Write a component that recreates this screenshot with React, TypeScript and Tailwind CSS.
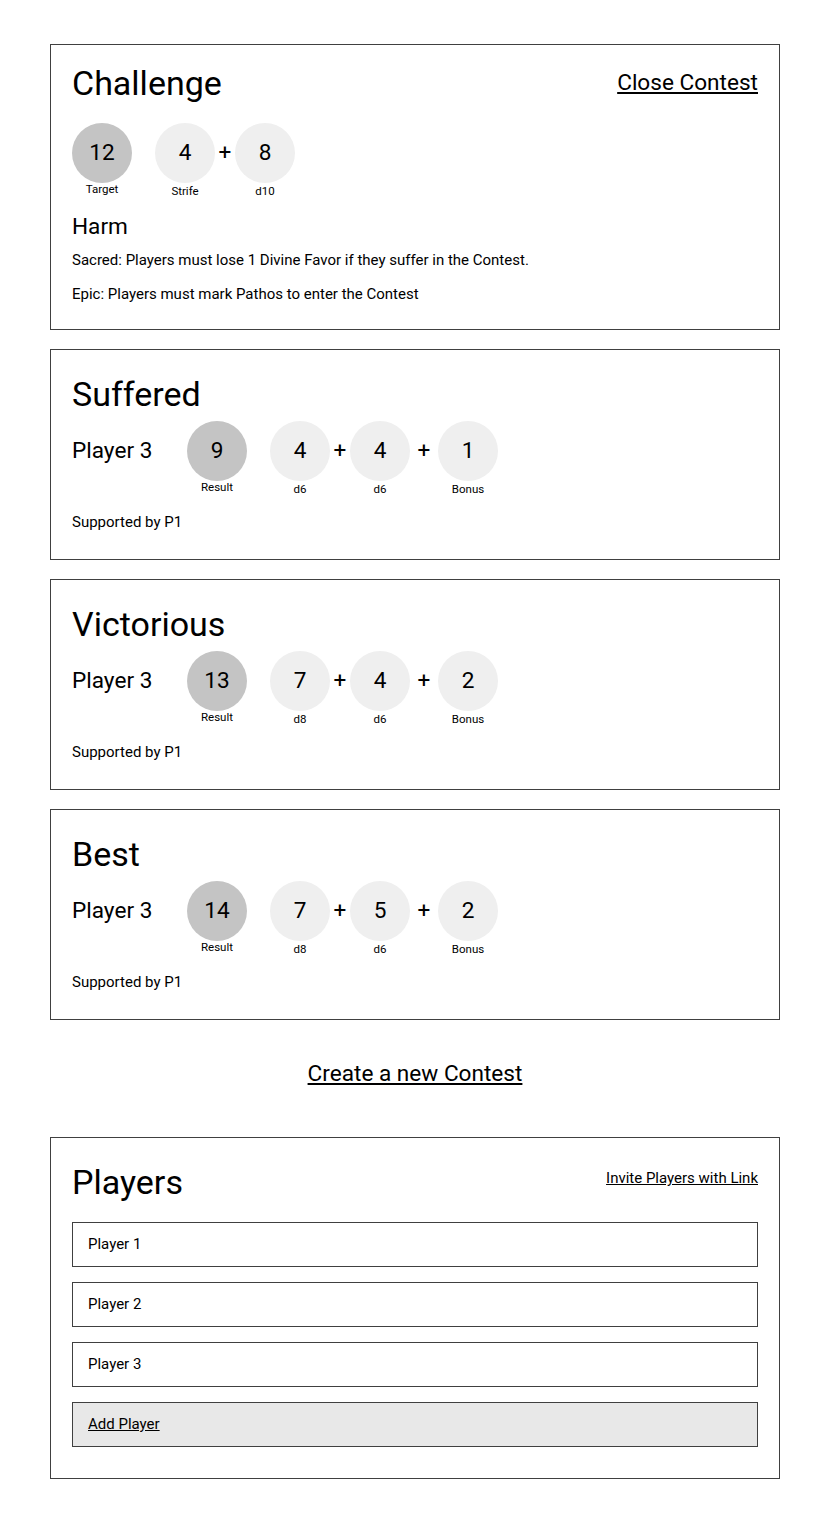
import React from 'react'

type DieProps = { value: number; label: string; main?: boolean }

const Die = ({ value, label, main }: DieProps) => (
  <div className="flex w-[60px] flex-col items-center">
    <div
      className={`flex h-[60px] w-[60px] items-center justify-center rounded-full text-[22.6px] ${
        main ? 'bg-[#c4c4c4]' : 'bg-[#efefef]'
      }`}
    >
      {value}
    </div>
    <span className={`text-[11.5px] leading-[13px] ${main ? 'mt-0' : 'mt-[2px]'}`}>{label}</span>
  </div>
)

const Plus = ({ wide }: { wide?: boolean }) => (
  <span className={`flex h-[60px] items-center justify-center text-[22.6px] ${wide ? 'w-[28px]' : 'w-[20px]'}`}>+</span>
)

type Roll = { value: number; label: string }

const ResultCard = ({ title, result, rolls }: { title: string; result: number; rolls: Roll[] }) => (
  <div className="border border-[#404040] px-[21px] pt-[24px] pb-[27px]">
    <h2 className="text-[34px] leading-[40px]">{title}</h2>
    <div className="mt-[7px] flex items-start">
      <span className="flex h-[60px] w-[115px] items-center text-[22.6px]">Player 3</span>
      <Die value={result} label="Result" main />
      <div className="ml-[23px] flex items-start">
        {rolls.map((r, i) => (
          <React.Fragment key={i}>
            {i > 0 && <Plus wide={i === 2} />}
            <Die value={r.value} label={r.label} />
          </React.Fragment>
        ))}
      </div>
    </div>
    <p className="mt-[16px] text-[15px] leading-[20px]">Supported by P1</p>
  </div>
)

export default function App() {
  return (
    <div className="min-h-screen bg-white pt-[44px] pb-[38px] text-black" style={{ fontFamily: 'Roboto, "Liberation Sans", sans-serif' }}>
      <div className="ml-[50px] flex w-[730px] flex-col gap-[19px]">
        {/* Challenge */}
        <div className="border border-[#404040] px-[21px] pt-[18px] pb-[25px]">
          <div className="flex items-center justify-between">
            <h2 className="text-[34px] leading-[40px]">Challenge</h2>
            <a href="#" className="text-[22.6px] underline">Close Contest</a>
          </div>
          <div className="mt-5 flex items-start">
            <Die value={12} label="Target" main />
            <div className="ml-[23px] flex items-start">
              <Die value={4} label="Strife" />
              <Plus />
              <Die value={8} label="d10" />
            </div>
          </div>
          <h3 className="mt-[16px] text-[22.6px] leading-[26px]">Harm</h3>
          <p className="mt-[10px] text-[15px] leading-[20px]">Sacred: Players must lose 1 Divine Favor if they suffer in the Contest.</p>
          <p className="mt-[14px] text-[15px] leading-[20px]">Epic: Players must mark Pathos to enter the Contest</p>
        </div>

        <ResultCard
          title="Suffered"
          result={9}
          rolls={[
            { value: 4, label: 'd6' },
            { value: 4, label: 'd6' },
            { value: 1, label: 'Bonus' },
          ]}
        />
        <ResultCard
          title="Victorious"
          result={13}
          rolls={[
            { value: 7, label: 'd8' },
            { value: 4, label: 'd6' },
            { value: 2, label: 'Bonus' },
          ]}
        />
        <ResultCard
          title="Best"
          result={14}
          rolls={[
            { value: 7, label: 'd8' },
            { value: 5, label: 'd6' },
            { value: 2, label: 'Bonus' },
          ]}
        />
      </div>

      <div className="ml-[50px] w-[730px] pt-[40px] pb-[49px] text-center">
        <a href="#" className="text-[22.6px] leading-[28px] underline">Create a new Contest</a>
      </div>

      {/* Players */}
      <div className="ml-[50px] w-[730px] border border-[#404040] px-[21px] pt-[24px] pb-[31px]">
        <div className="flex items-start justify-between">
          <h2 className="text-[34px] leading-[40px]">Players</h2>
          <a href="#" className="mt-[7px] text-[15px] leading-[18px] underline">Invite Players with Link</a>
        </div>
        <div className="mt-5 flex flex-col gap-[15px]">
          {['Player 1', 'Player 2', 'Player 3'].map((p) => (
            <div key={p} className="flex h-[45px] items-center border border-[#404040] px-[15px] text-[15px]">
              {p}
            </div>
          ))}
          <div className="flex h-[45px] items-center border border-[#404040] bg-[#e8e8e8] px-[15px] text-[15px]">
            <a href="#" className="underline">Add Player</a>
          </div>
        </div>
      </div>
    </div>
  )
}
